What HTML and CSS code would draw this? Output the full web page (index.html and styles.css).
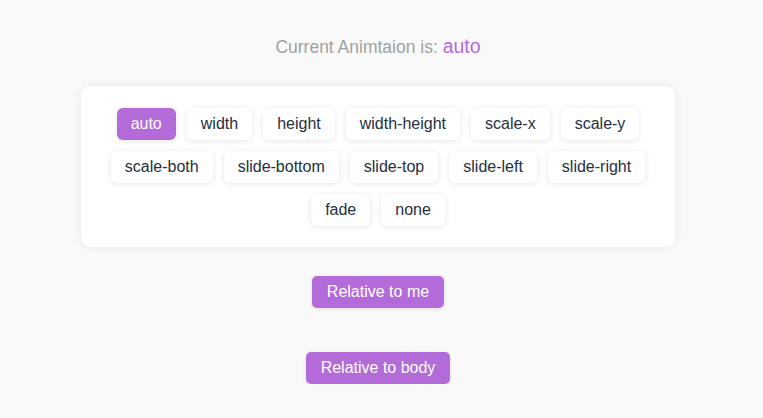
FILE: index.html
```html
<!DOCTYPE html>
<html>
<head>
<meta charset="utf-8">
<link rel="stylesheet" href="styles.css">
</head>
<body>
<div class="page">
  <div class="title">Current Animtaion is: <span class="current">auto</span></div>
  <div class="card">
    <button class="opt active">auto</button>
    <button class="opt">width</button>
    <button class="opt">height</button>
    <button class="opt">width-height</button>
    <button class="opt">scale-x</button>
    <button class="opt">scale-y</button>
    <button class="opt">scale-both</button>
    <button class="opt">slide-bottom</button>
    <button class="opt">slide-top</button>
    <button class="opt">slide-left</button>
    <button class="opt">slide-right</button>
    <button class="opt">fade</button>
    <button class="opt">none</button>
  </div>
  <button class="action first">Relative to me</button>
  <button class="action second">Relative to body</button>
</div>
</body>
</html>
```
FILE: styles.css
```css
html, body {
  margin: 0;
  padding: 0;
  background: #f9f9f9;
  font-family: "Liberation Sans", Arial, sans-serif;
}
.page {
  width: 756px;
  display: flex;
  flex-direction: column;
  align-items: center;
  padding-top: 33px;
}
.title {
  font-size: 17.5px;
  color: #a1a1a1;
  height: 26px;
  line-height: 26px;
}
.current {
  font-size: 19.5px;
  color: #b36bd9;
}
.card {
  margin-top: 27px;
  width: 594px;
  box-sizing: border-box;
  background: #fff;
  border-radius: 9px;
  box-shadow: 0 0 10px rgba(0, 0, 0, 0.07);
  padding: 22px 28px 21px;
  display: flex;
  flex-wrap: wrap;
  justify-content: center;
  gap: 11px;
}
.opt {
  height: 32px;
  padding: 0 14px;
  border: none;
  border-radius: 6px;
  background: #fff;
  color: #262f40;
  font-family: "Liberation Sans", Arial, sans-serif;
  font-size: 16px;
  box-shadow: 0 1px 6px rgba(0, 0, 0, 0.1);
  cursor: pointer;
}
.opt.active {
  background: #b36bd9;
  color: #fff;
}
.action {
  height: 32px;
  padding: 0 15px;
  border: none;
  border-radius: 5px;
  background: #b36bd9;
  color: #fff;
  font-family: "Liberation Sans", Arial, sans-serif;
  font-size: 16px;
  box-shadow: 0 1px 4px rgba(0, 0, 0, 0.1);
}
.action.first {
  margin-top: 29px;
}
.action.second {
  margin-top: 44px;
}
```
